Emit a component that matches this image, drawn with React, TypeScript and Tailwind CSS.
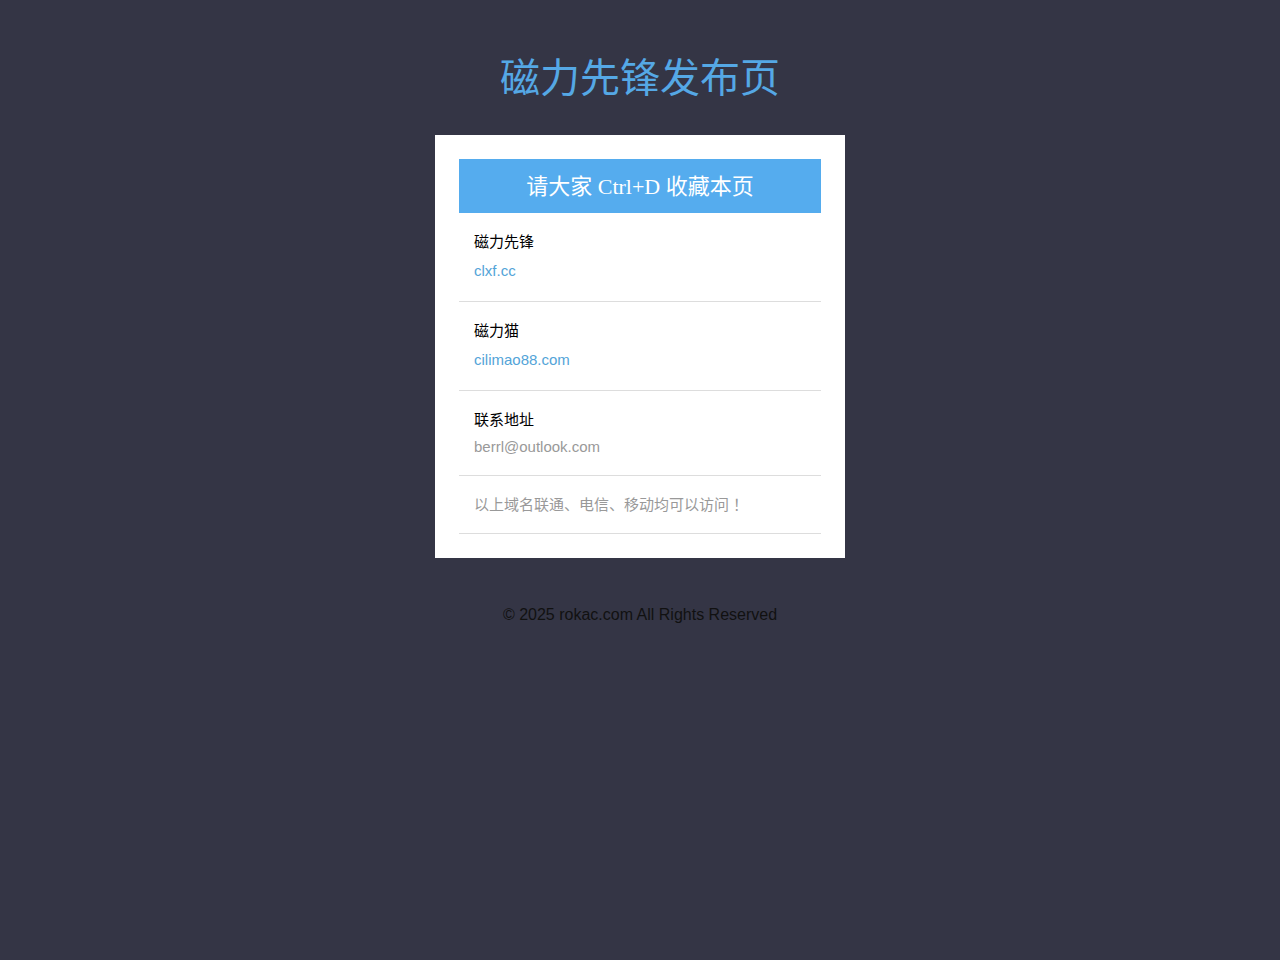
const SANS = "font-['Liberation_Sans','Noto_Sans_CJK_SC',sans-serif]";

type Item = { label: string; value: string; link?: boolean };

const ITEMS: Item[] = [
  { label: "磁力先锋", value: "clxf.cc", link: true },
  { label: "磁力猫", value: "cilimao88.com", link: true },
];

export default function App() {
  return (
    <div className={`min-h-[960px] bg-[#343545] ${SANS}`}>
      <h1 className="pt-[45px] h-[107px] text-center text-[40px] leading-[60px] text-[#55a8e5] font-['Noto_Sans_CJK_SC',sans-serif] font-normal">
        磁力先锋发布页
      </h1>

      <div className="mx-auto mt-[28px] w-[410px] bg-white p-6">
        <div className="flex h-[54px] items-center justify-center bg-[#55acee] text-[22px] text-white font-['Liberation_Serif','Noto_Sans_CJK_SC',serif]">
          请大家 Ctrl+D 收藏本页
        </div>

        {ITEMS.map((it) => (
          <div key={it.label} className="border-b border-[#dddddd] px-[15px] pt-[16px] pb-[14px]">
            <div className="h-[26px] text-[15px] leading-[26px] text-black">{it.label}</div>
            <a href="#" className="block h-[32px] text-[15px] leading-[32px] text-[#53a4d8]">
              {it.value}
            </a>
          </div>
        ))}

        <div className="border-b border-[#dddddd] px-[15px] pt-[16px] pb-[14px]">
          <div className="h-[26px] text-[15px] leading-[26px] text-black">联系地址</div>
          <div className="h-[28px] text-[15px] leading-[28px] text-[#999999]">berrl@outlook.com</div>
        </div>

        <div className="border-b border-[#dddddd] px-[15px] pt-[15px] pb-[16px]">
          <div className="h-[26px] text-[15px] leading-[26px] text-[#999999]">
            以上域名联通、电信、移动均可以访问<span className="pl-1 font-['Noto_Sans_CJK_SC',sans-serif]">！</span>
          </div>
        </div>
      </div>

      <p className="mt-[45px] text-center text-base leading-6 text-[#111111]">
        © 2025 rokac.com All Rights Reserved
      </p>
    </div>
  );
}
